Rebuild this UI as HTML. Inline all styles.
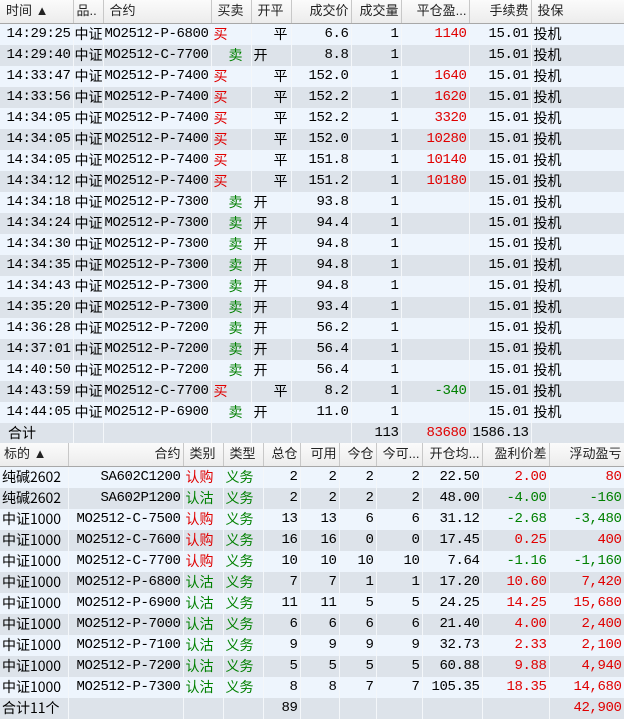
<!DOCTYPE html>
<html><head><meta charset="utf-8">
<style>
*{margin:0;padding:0;box-sizing:border-box}
body{width:624px;height:719px;overflow:hidden;background:#fff;font-family:"Liberation Mono","WenQuanYi Zen Hei",monospace;font-size:14px;letter-spacing:-0.4px;color:#000}
table{border-collapse:collapse;table-layout:fixed;position:absolute;left:0}
td,th{height:21px;line-height:21px;white-space:nowrap;overflow:hidden;padding:0 2px;border-right:1px solid #f4f7fa}
th{font-family:"Liberation Sans","WenQuanYi Zen Hei",sans-serif;letter-spacing:0;font-weight:normal;font-size:13px;color:#222;height:23px;line-height:22px;background:linear-gradient(#fbfbfb,#ececec);border-right:1px solid #c8c8c8;border-bottom:1px solid #a8a8a8;text-align:left;padding-left:6px}
tr:nth-child(odd) td{background:#eef5fd}
tr:nth-child(even) td{background:#dde3ea}
.r{text-align:right}.c{text-align:center}
.red{color:#e00000}.g{color:#008000}
.cj{font-family:"WenQuanYi Zen Hei","Noto Sans CJK SC",sans-serif;font-size:14px;letter-spacing:0}
tr.tot td{background:#dde3ea}
.ct{padding:0 0 0 1px}
</style></head><body>
<table style="top:0;width:624px">
<colgroup><col style="width:73px"><col style="width:30px"><col style="width:108px"><col style="width:40px"><col style="width:40px"><col style="width:60px"><col style="width:50px"><col style="width:68px"><col style="width:62px"><col style="width:93px"></colgroup>
<thead><tr><th>时间 ▲</th><th style="padding-left:3px">品..</th><th>合约</th><th>买卖</th><th>开平</th><th class="r">成交价</th><th class="r">成交量</th><th class="r">平仓盈...</th><th class="r">手续费</th><th>投保</th></tr></thead>
<tbody>
<tr><td class="r">14:29:25</td><td class="cj ct">中证</td><td class="ct">MO2512-P-6800</td><td class="red cj">买</td><td class="cj" style="padding-left:22px">平</td><td class="r">6.6</td><td class="r">1</td><td class="r red">1140</td><td class="r">15.01</td><td class="cj">投机</td></tr>
<tr><td class="r">14:29:40</td><td class="cj ct">中证</td><td class="ct">MO2512-C-7700</td><td class="g cj" style="padding-left:17px">卖</td><td class="cj">开</td><td class="r">8.8</td><td class="r">1</td><td class="r"></td><td class="r">15.01</td><td class="cj">投机</td></tr>
<tr><td class="r">14:33:47</td><td class="cj ct">中证</td><td class="ct">MO2512-P-7400</td><td class="red cj">买</td><td class="cj" style="padding-left:22px">平</td><td class="r">152.0</td><td class="r">1</td><td class="r red">1640</td><td class="r">15.01</td><td class="cj">投机</td></tr>
<tr><td class="r">14:33:56</td><td class="cj ct">中证</td><td class="ct">MO2512-P-7400</td><td class="red cj">买</td><td class="cj" style="padding-left:22px">平</td><td class="r">152.2</td><td class="r">1</td><td class="r red">1620</td><td class="r">15.01</td><td class="cj">投机</td></tr>
<tr><td class="r">14:34:05</td><td class="cj ct">中证</td><td class="ct">MO2512-P-7400</td><td class="red cj">买</td><td class="cj" style="padding-left:22px">平</td><td class="r">152.2</td><td class="r">1</td><td class="r red">3320</td><td class="r">15.01</td><td class="cj">投机</td></tr>
<tr><td class="r">14:34:05</td><td class="cj ct">中证</td><td class="ct">MO2512-P-7400</td><td class="red cj">买</td><td class="cj" style="padding-left:22px">平</td><td class="r">152.0</td><td class="r">1</td><td class="r red">10280</td><td class="r">15.01</td><td class="cj">投机</td></tr>
<tr><td class="r">14:34:05</td><td class="cj ct">中证</td><td class="ct">MO2512-P-7400</td><td class="red cj">买</td><td class="cj" style="padding-left:22px">平</td><td class="r">151.8</td><td class="r">1</td><td class="r red">10140</td><td class="r">15.01</td><td class="cj">投机</td></tr>
<tr><td class="r">14:34:12</td><td class="cj ct">中证</td><td class="ct">MO2512-P-7400</td><td class="red cj">买</td><td class="cj" style="padding-left:22px">平</td><td class="r">151.2</td><td class="r">1</td><td class="r red">10180</td><td class="r">15.01</td><td class="cj">投机</td></tr>
<tr><td class="r">14:34:18</td><td class="cj ct">中证</td><td class="ct">MO2512-P-7300</td><td class="g cj" style="padding-left:17px">卖</td><td class="cj">开</td><td class="r">93.8</td><td class="r">1</td><td class="r"></td><td class="r">15.01</td><td class="cj">投机</td></tr>
<tr><td class="r">14:34:24</td><td class="cj ct">中证</td><td class="ct">MO2512-P-7300</td><td class="g cj" style="padding-left:17px">卖</td><td class="cj">开</td><td class="r">94.4</td><td class="r">1</td><td class="r"></td><td class="r">15.01</td><td class="cj">投机</td></tr>
<tr><td class="r">14:34:30</td><td class="cj ct">中证</td><td class="ct">MO2512-P-7300</td><td class="g cj" style="padding-left:17px">卖</td><td class="cj">开</td><td class="r">94.8</td><td class="r">1</td><td class="r"></td><td class="r">15.01</td><td class="cj">投机</td></tr>
<tr><td class="r">14:34:35</td><td class="cj ct">中证</td><td class="ct">MO2512-P-7300</td><td class="g cj" style="padding-left:17px">卖</td><td class="cj">开</td><td class="r">94.8</td><td class="r">1</td><td class="r"></td><td class="r">15.01</td><td class="cj">投机</td></tr>
<tr><td class="r">14:34:43</td><td class="cj ct">中证</td><td class="ct">MO2512-P-7300</td><td class="g cj" style="padding-left:17px">卖</td><td class="cj">开</td><td class="r">94.8</td><td class="r">1</td><td class="r"></td><td class="r">15.01</td><td class="cj">投机</td></tr>
<tr><td class="r">14:35:20</td><td class="cj ct">中证</td><td class="ct">MO2512-P-7300</td><td class="g cj" style="padding-left:17px">卖</td><td class="cj">开</td><td class="r">93.4</td><td class="r">1</td><td class="r"></td><td class="r">15.01</td><td class="cj">投机</td></tr>
<tr><td class="r">14:36:28</td><td class="cj ct">中证</td><td class="ct">MO2512-P-7200</td><td class="g cj" style="padding-left:17px">卖</td><td class="cj">开</td><td class="r">56.2</td><td class="r">1</td><td class="r"></td><td class="r">15.01</td><td class="cj">投机</td></tr>
<tr><td class="r">14:37:01</td><td class="cj ct">中证</td><td class="ct">MO2512-P-7200</td><td class="g cj" style="padding-left:17px">卖</td><td class="cj">开</td><td class="r">56.4</td><td class="r">1</td><td class="r"></td><td class="r">15.01</td><td class="cj">投机</td></tr>
<tr><td class="r">14:40:50</td><td class="cj ct">中证</td><td class="ct">MO2512-P-7200</td><td class="g cj" style="padding-left:17px">卖</td><td class="cj">开</td><td class="r">56.4</td><td class="r">1</td><td class="r"></td><td class="r">15.01</td><td class="cj">投机</td></tr>
<tr><td class="r">14:43:59</td><td class="cj ct">中证</td><td class="ct">MO2512-C-7700</td><td class="red cj">买</td><td class="cj" style="padding-left:22px">平</td><td class="r">8.2</td><td class="r">1</td><td class="r g">-340</td><td class="r">15.01</td><td class="cj">投机</td></tr>
<tr><td class="r">14:44:05</td><td class="cj ct">中证</td><td class="ct">MO2512-P-6900</td><td class="g cj" style="padding-left:17px">卖</td><td class="cj">开</td><td class="r">11.0</td><td class="r">1</td><td class="r"></td><td class="r">15.01</td><td class="cj">投机</td></tr>
<tr class="tot"><td class="cj" style="padding-left:8px">合计</td><td></td><td></td><td></td><td></td><td></td><td class="r">113</td><td class="r red">83680</td><td class="r">1586.13</td><td></td></tr>
</tbody></table>

<table style="top:443px;width:624px">
<colgroup><col style="width:68px"><col style="width:115px"><col style="width:40px"><col style="width:40px"><col style="width:37px"><col style="width:39px"><col style="width:37px"><col style="width:46px"><col style="width:60px"><col style="width:67px"><col style="width:75px"></colgroup>
<thead><tr><th style="padding-left:4px">标的 ▲</th><th class="r">合约</th><th>类别</th><th>类型</th><th class="r">总仓</th><th class="r">可用</th><th class="r">今仓</th><th class="r">今可...</th><th class="r">开仓均...</th><th class="r">盈利价差</th><th class="r">浮动盈亏</th></tr></thead>
<tbody>
<tr><td class="cj">纯碱2602</td><td class="r">SA602C1200</td><td class="red cj">认购</td><td class="g cj">义务</td><td class="r">2</td><td class="r">2</td><td class="r">2</td><td class="r">2</td><td class="r">22.50</td><td class="r red">2.00</td><td class="r red">80</td></tr>
<tr><td class="cj">纯碱2602</td><td class="r">SA602P1200</td><td class="g cj">认沽</td><td class="g cj">义务</td><td class="r">2</td><td class="r">2</td><td class="r">2</td><td class="r">2</td><td class="r">48.00</td><td class="r g">-4.00</td><td class="r g">-160</td></tr>
<tr><td class="cj">中证1000</td><td class="r">MO2512-C-7500</td><td class="red cj">认购</td><td class="g cj">义务</td><td class="r">13</td><td class="r">13</td><td class="r">6</td><td class="r">6</td><td class="r">31.12</td><td class="r g">-2.68</td><td class="r g">-3,480</td></tr>
<tr><td class="cj">中证1000</td><td class="r">MO2512-C-7600</td><td class="red cj">认购</td><td class="g cj">义务</td><td class="r">16</td><td class="r">16</td><td class="r">0</td><td class="r">0</td><td class="r">17.45</td><td class="r red">0.25</td><td class="r red">400</td></tr>
<tr><td class="cj">中证1000</td><td class="r">MO2512-C-7700</td><td class="red cj">认购</td><td class="g cj">义务</td><td class="r">10</td><td class="r">10</td><td class="r">10</td><td class="r">10</td><td class="r">7.64</td><td class="r g">-1.16</td><td class="r g">-1,160</td></tr>
<tr><td class="cj">中证1000</td><td class="r">MO2512-P-6800</td><td class="g cj">认沽</td><td class="g cj">义务</td><td class="r">7</td><td class="r">7</td><td class="r">1</td><td class="r">1</td><td class="r">17.20</td><td class="r red">10.60</td><td class="r red">7,420</td></tr>
<tr><td class="cj">中证1000</td><td class="r">MO2512-P-6900</td><td class="g cj">认沽</td><td class="g cj">义务</td><td class="r">11</td><td class="r">11</td><td class="r">5</td><td class="r">5</td><td class="r">24.25</td><td class="r red">14.25</td><td class="r red">15,680</td></tr>
<tr><td class="cj">中证1000</td><td class="r">MO2512-P-7000</td><td class="g cj">认沽</td><td class="g cj">义务</td><td class="r">6</td><td class="r">6</td><td class="r">6</td><td class="r">6</td><td class="r">21.40</td><td class="r red">4.00</td><td class="r red">2,400</td></tr>
<tr><td class="cj">中证1000</td><td class="r">MO2512-P-7100</td><td class="g cj">认沽</td><td class="g cj">义务</td><td class="r">9</td><td class="r">9</td><td class="r">9</td><td class="r">9</td><td class="r">32.73</td><td class="r red">2.33</td><td class="r red">2,100</td></tr>
<tr><td class="cj">中证1000</td><td class="r">MO2512-P-7200</td><td class="g cj">认沽</td><td class="g cj">义务</td><td class="r">5</td><td class="r">5</td><td class="r">5</td><td class="r">5</td><td class="r">60.88</td><td class="r red">9.88</td><td class="r red">4,940</td></tr>
<tr><td class="cj">中证1000</td><td class="r">MO2512-P-7300</td><td class="g cj">认沽</td><td class="g cj">义务</td><td class="r">8</td><td class="r">8</td><td class="r">7</td><td class="r">7</td><td class="r">105.35</td><td class="r red">18.35</td><td class="r red">14,680</td></tr>
<tr class="tot"><td class="cj">合计11个</td><td></td><td></td><td></td><td class="r">89</td><td></td><td></td><td></td><td></td><td></td><td class="r red">42,900</td></tr>
</tbody></table>
</body></html>
